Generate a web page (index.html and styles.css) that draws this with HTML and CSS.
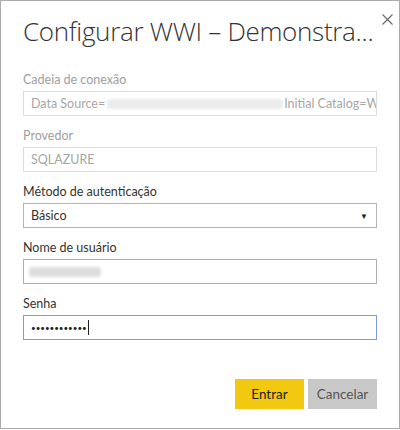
FILE: index.html
```html
<!DOCTYPE html>
<html lang="pt">
<head>
<meta charset="utf-8">
<link rel="stylesheet" href="styles.css">
</head>
<body>
<div class="dialog">
  <button class="close" aria-label="Fechar">
    <svg width="11" height="11" viewBox="0 0 11 11"><path d="M0.5 0.5L10.5 10.5M10.5 0.5L0.5 10.5" stroke="#666" stroke-width="1.1" fill="none"/></svg>
  </button>
  <h1 class="title">Configurar WWI – Demonstra...</h1>
  <div class="form">
    <div class="field">
      <div class="label disabled">Cadeia de conexão</div>
      <div class="input disabled-input"><span>Data Source=</span><span class="blur wide"></span><span>Initial Catalog=Wide</span></div>
    </div>
    <div class="field">
      <div class="label disabled">Provedor</div>
      <div class="input disabled-input"><span>SQLAZURE</span></div>
    </div>
    <div class="field">
      <div class="label">Método de autenticação</div>
      <div class="input select"><span class="val">Básico</span><span class="arrow">▼</span></div>
    </div>
    <div class="field">
      <div class="label">Nome de usuário</div>
      <div class="input active"><span class="blur user"></span></div>
    </div>
    <div class="field">
      <div class="label">Senha</div>
      <div class="input focus"><span class="dots">••••••••••••</span><span class="caret"></span></div>
    </div>
  </div>
  <div class="actions">
    <button class="btn primary">Entrar</button>
    <button class="btn secondary">Cancelar</button>
  </div>
</div>
</body>
</html>
```

FILE: styles.css
```css
* { box-sizing: border-box; }
html, body { margin: 0; padding: 0; background: #fff; }
body { font-family: Lato, Roboto, sans-serif; }

.dialog {
  position: relative;
  width: 400px;
  height: 429px;
  border: 1px solid #ababab;
  padding: 0 22px 0 22px;
  background: #fff;
}

.close {
  position: absolute;
  top: 13px;
  right: 6px;
  width: 11px;
  height: 11px;
  padding: 0;
  border: 0;
  background: none;
  line-height: 0;
}

.title {
  margin: 0;
  padding-top: 12px;
  font-family: "Open Sans", sans-serif;
  font-size: 26px;
  font-weight: 300;
  line-height: 36px;
  color: #333;
  white-space: nowrap;
  letter-spacing: -0.3px;
}

.form {
  margin-top: 23px;
  display: flex;
  flex-direction: column;
  gap: 12px;
}

.field { display: flex; flex-direction: column; gap: 3px; }

.label {
  font-size: 12.5px;
  line-height: 16px;
  color: #333;
  white-space: nowrap;
}
.label.disabled { color: #a0a0a0; }

.input {
  width: 354px;
  height: 25px;
  border: 1px solid #b5b5b5;
  padding: 0 7px;
  display: flex;
  align-items: center;
  font-size: 12.5px;
  color: #333;
  white-space: nowrap;
  overflow: hidden;
}
.input > span { flex-shrink: 0; }
.disabled-input { border-color: #dcdcdc; color: #a6a6a6; }
.select { border-color: #b3b3b3; justify-content: space-between; }
.select .arrow { font-size: 8px; color: #222; margin-right: 1px; }
.active { border-color: #b0b0b0; }
.focus { border-color: #78a0e0; }

.blur {
  display: inline-block;
  height: 10px;
  background: #ececec;
  filter: blur(1.5px);
  border-radius: 3px;
}
.blur.wide { width: 176px; margin: 0 1px 0 2px; }
.blur.user { width: 72px; background: #dedede; margin-left: -2px; }

.dots { font-size: 8px; letter-spacing: 0; color: #222; }
.caret { display: inline-block; width: 1px; height: 15px; background: #222; margin-left: 1px; }

.actions {
  margin-top: 39px;
  display: flex;
  justify-content: flex-end;
  gap: 4px;
  width: 354px;
}

.btn {
  width: 69px;
  height: 30px;
  border: 0;
  font-family: Lato, Roboto, sans-serif;
  font-size: 13.5px;
  padding: 0;
}
.primary { background: #f2c811; color: #222; }
.secondary { background: #c8c8c8; color: #555; }
```
